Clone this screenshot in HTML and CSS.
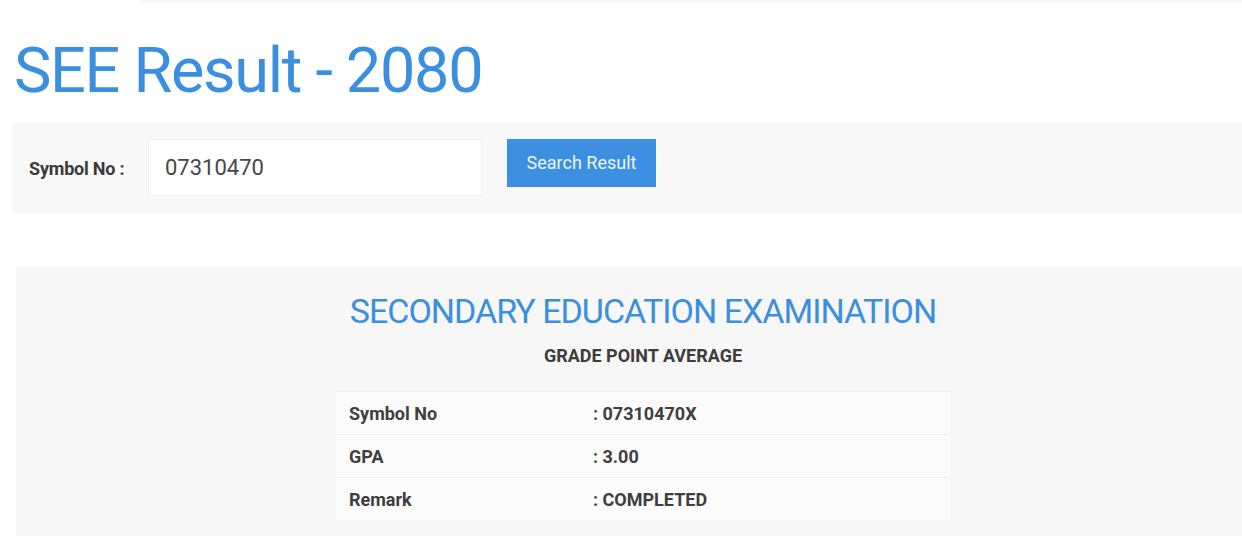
FILE: index.html
```html
<!DOCTYPE html>
<html lang="en">
<head>
    <meta charset="UTF-8">
    <meta name="viewport" content="width=device-width, initial-scale=1.0">
    <title>SEE Result - 2080</title>
    <link rel="stylesheet" href="styles.css">
</head>
<body>

<div class="top-strip"></div>

<div class="page">
    <h1 class="page-title">SEE Result - 2080</h1>

    <form class="search-bar" onsubmit="return false;">
        <label for="symbol">Symbol No :</label>
        <input type="text" id="symbol" value="07310470">
        <button type="submit">Search Result</button>
    </form>

    <!-- Result -->
    <div class="result-panel">
        <h2>SECONDARY EDUCATION EXAMINATION</h2>
        <h3>GRADE POINT AVERAGE</h3>

        <table class="result-table">
            <tr>
                <td>Symbol No</td>
                <td>: 07310470X</td>
            </tr>
            <tr>
                <td>GPA</td>
                <td>: 3.00</td>
            </tr>
            <tr>
                <td>Remark</td>
                <td>: COMPLETED</td>
            </tr>
        </table>
    </div>
</div>

</body>
</html>
```

FILE: styles.css
```css
body {
    font-family: Roboto, "Liberation Sans", Arial, sans-serif;
    background-color: #fff;
    margin: 0;
    padding: 0;
    overflow: hidden;
}

.top-strip {
    margin-left: 140px;
    height: 3px;
    background-color: #f9f7fb;
}

.page {
    width: 1258px;
    padding-left: 12px;
}

.page-title {
    color: #3b8fdf;
    font-size: 63px;
    font-weight: 400;
    letter-spacing: -1.3px;
    margin: 30px 0 14px 2px;
    line-height: 76px;
}

/* Search bar */
.search-bar {
    display: flex;
    align-items: flex-start;
    background-color: #f8f8f8;
    padding: 16px 0 17px 17px;
}

.search-bar label {
    width: 119px;
    line-height: 55px;
    padding-top: 2px;
    font-size: 18px;
    font-weight: bold;
    color: #3a3a3a;
    letter-spacing: -0.2px;
}

.search-bar input {
    box-sizing: border-box;
    width: 334px;
    height: 57px;
    border: 1px solid #efefef;
    background-color: #fff;
    padding: 0 16px;
    font-family: inherit;
    font-size: 22px;
    color: #474747;
    outline: none;
}

.search-bar button {
    margin-left: 25px;
    width: 149px;
    height: 48px;
    border: none;
    background-color: #3d8fe2;
    color: #eef6ff;
    font-family: inherit;
    font-size: 18px;
    padding-bottom: 2px;
    cursor: pointer;
}

/* Result panel */
.result-panel {
    margin: 54px 0 0 4px;
    background-color: #f7f7f7;
    padding: 22px 0 30px;
}

.result-panel h2 {
    color: #3b8fdf;
    font-size: 34px;
    font-weight: 400;
    letter-spacing: -1px;
    text-align: center;
    margin: 0;
    line-height: 44px;
}

.result-panel h3 {
    color: #3d3d3d;
    font-size: 18px;
    font-weight: bold;
    text-align: center;
    margin: 12px 0 24px;
    line-height: 22px;
}

.result-table {
    width: 614px;
    margin: 0 auto;
    border-collapse: collapse;
    background-color: #fbfbfb;
}

.result-table td {
    height: 42px;
    padding: 0 13px;
    font-size: 18px;
    font-weight: bold;
    color: #3f3f3f;
    border-top: 1px solid #f2f2f2;
}

.result-table td:first-child {
    width: 218px;
}
```
